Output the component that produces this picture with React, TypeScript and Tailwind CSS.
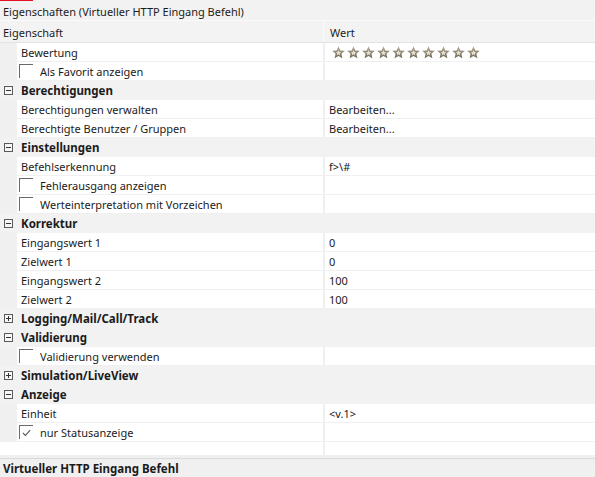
import React from "react";

type Row =
  | { kind: "prop"; name: string; value?: string; stars?: boolean }
  | { kind: "check"; name: string; checked?: boolean }
  | { kind: "group"; name: string; open: boolean };

const rows: Row[] = [
  { kind: "prop", name: "Bewertung", stars: true },
  { kind: "check", name: "Als Favorit anzeigen" },
  { kind: "group", name: "Berechtigungen", open: true },
  { kind: "prop", name: "Berechtigungen verwalten", value: "Bearbeiten..." },
  { kind: "prop", name: "Berechtigte Benutzer / Gruppen", value: "Bearbeiten..." },
  { kind: "group", name: "Einstellungen", open: true },
  { kind: "prop", name: "Befehlserkennung", value: "f>\\#" },
  { kind: "check", name: "Fehlerausgang anzeigen" },
  { kind: "check", name: "Werteinterpretation mit Vorzeichen" },
  { kind: "group", name: "Korrektur", open: true },
  { kind: "prop", name: "Eingangswert 1", value: "0" },
  { kind: "prop", name: "Zielwert 1", value: "0" },
  { kind: "prop", name: "Eingangswert 2", value: "100" },
  { kind: "prop", name: "Zielwert 2", value: "100" },
  { kind: "group", name: "Logging/Mail/Call/Track", open: false },
  { kind: "group", name: "Validierung", open: true },
  { kind: "check", name: "Validierung verwenden" },
  { kind: "group", name: "Simulation/LiveView", open: false },
  { kind: "group", name: "Anzeige", open: true },
  { kind: "prop", name: "Einheit", value: "<v.1>" },
  { kind: "check", name: "nur Statusanzeige", checked: true },
];

function Star() {
  return (
    <svg width="13" height="13" viewBox="0 0 13 13">
      <defs>
        <linearGradient id="sg" x1="0" y1="0" x2="0" y2="1">
          <stop offset="0" stopColor="#b5ad99" />
          <stop offset="1" stopColor="#6f6653" />
        </linearGradient>
      </defs>
      <polygon
        points="6.5,0.3 8.3,4.4 12.8,4.8 9.4,7.7 10.4,12.3 6.5,9.9 2.6,12.3 3.6,7.7 0.2,4.8 4.7,4.4"
        fill="url(#sg)"
      />
      <polygon
        points="6.5,3.8 7.2,5.9 9.3,6 7.7,7.3 8.2,9.4 6.5,8.2 4.8,9.4 5.3,7.3 3.7,6 5.8,5.9"
        fill="#e9e5dc"
      />
    </svg>
  );
}

function Box({ open }: { open: boolean }) {
  return (
    <div className="relative w-[9px] h-[9px] border border-[#5a5a5a] bg-[#f7f7f7]">
      <div className="absolute left-[1px] top-[3px] w-[5px] h-[1px] bg-[#333]" />
      {!open && <div className="absolute left-[3px] top-[1px] w-[1px] h-[5px] bg-[#333]" />}
    </div>
  );
}

function Check({ checked }: { checked?: boolean }) {
  return (
    <div className="relative w-[14px] h-[14px] border-l border-t border-[#6a6a6a] bg-white">
      {checked && (
        <svg className="absolute left-[2px] top-[3px]" width="9" height="8" viewBox="0 0 9 8">
          <path d="M0.8 3.8 L3.4 6.4 L8.2 1.2" stroke="#555" strokeWidth="1.1" fill="none" />
        </svg>
      )}
    </div>
  );
}

export default function App() {
  return (
    <div className="w-[595px] h-[477px] overflow-hidden bg-[#f0f0f0] text-[#1b1b1b] text-[11px] leading-none font-['Noto_Sans','Open_Sans',sans-serif] flex flex-col">
      <div className="relative h-[20px] bg-[#f2f2f2] flex items-center pl-[3px] pt-[2px] shrink-0">
        <div className="absolute left-0 top-0 w-[33px] h-[1px] bg-[#e81123]" />
        <span>Eigenschaften (Virtueller HTTP Eingang Befehl)</span>
      </div>
      <div className="h-[1px] bg-[#fafafa] shrink-0" />
      <div className="h-[22px] bg-[#f3f3f3] border-b border-[#e3e3e3] flex shrink-0">
        <div className="w-[324px] flex items-center pl-[3px] pt-[1px] border-r border-[#fbfbfb]">Eigenschaft</div>
        <div className="flex-1 flex items-center pl-[6px] pt-[1px]">Wert</div>
      </div>
      <div className="flex flex-col shrink-0">
        {rows.map((r, i) => {
          if (r.kind === "group") {
            return (
              <div key={i} className="h-[19px] flex items-center bg-[#f2f2f2]">
                <div className="w-[17px] flex justify-center pl-[1px] pr-[2px]">
                  <Box open={r.open} />
                </div>
                <span className="font-bold text-[11.5px] pl-[4px] pt-[1px]">{r.name}</span>
              </div>
            );
          }
          return (
            <div key={i} className="h-[19px] flex pb-[1px] bg-[#f0f0f0]">
              <div className="w-[17px]" />
              <div className="w-[306px] bg-white flex items-center">
                {r.kind === "check" ? (
                  <>
                    <div className="ml-[2px]">
                      <Check checked={r.checked} />
                    </div>
                    <span className="pl-[7px] pt-[1px]">{r.name}</span>
                  </>
                ) : (
                  <span className="pl-[4px] pt-[1px]">{r.name}</span>
                )}
              </div>
              <div className="w-[2px]" />
              <div className="flex-1 bg-white flex items-center pl-[4px]">
                {r.kind === "prop" && r.stars ? (
                  <div className="flex gap-[2px] pl-[3px]">
                    {Array.from({ length: 10 }).map((_, k) => (
                      <Star key={k} />
                    ))}
                  </div>
                ) : r.kind === "prop" ? (
                  <span className="pt-[1px]">{r.value}</span>
                ) : null}
              </div>
            </div>
          );
        })}
        <div className="h-[13px] flex bg-[#f0f0f0]">
          <div className="w-[323px] bg-white" />
          <div className="w-[2px]" />
          <div className="flex-1 bg-white" />
        </div>
      </div>
      <div className="h-[3px] bg-[#f0f0f0] shrink-0" />
      <div className="h-[1px] bg-[#dadada] shrink-0" />
      <div className="flex-1 bg-[#f0f0f0] flex items-center pl-[3px] pt-[2px]">
        <span className="font-bold text-[11.5px]">Virtueller HTTP Eingang Befehl</span>
      </div>
    </div>
  );
}
